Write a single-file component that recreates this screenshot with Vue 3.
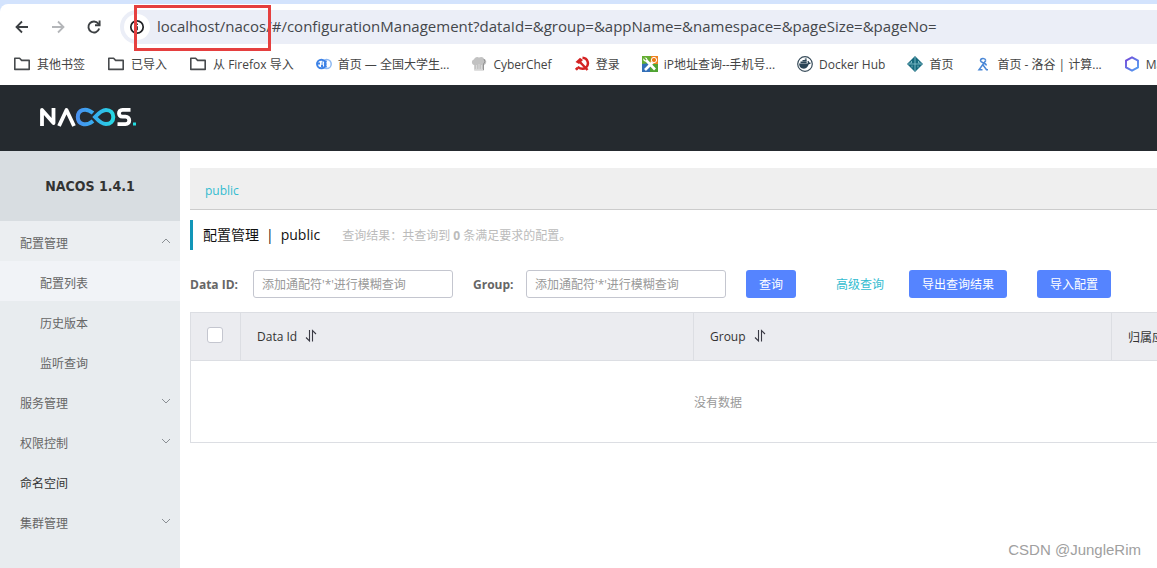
<script setup>
import { ref } from 'vue'

const url = ref('localhost/nacos/#/configurationManagement?dataId=&group=&appName=&namespace=&pageSize=&pageNo=')
const dataId = ref('')
const group = ref('')

const bookmarks = [
  { icon: 'folder', label: '其他书签' },
  { icon: 'folder', label: '已导入' },
  { icon: 'folder', label: '从 Firefox 导入' },
  { icon: 'rings', label: '首页 — 全国大学生...' },
  { icon: 'chef', label: 'CyberChef' },
  { icon: 'emblem', label: '登录' },
  { icon: 'tools', label: 'iP地址查询--手机号...' },
  { icon: 'docker', label: 'Docker Hub' },
  { icon: 'diamond', label: '首页' },
  { icon: 'luogu', label: '首页 - 洛谷 | 计算...' },
  { icon: 'hexagon', label: 'Maven' },
]

const menu = [
  { label: '配置管理', arrow: 'up', open: true },
  { label: '配置列表', child: true, active: true },
  { label: '历史版本', child: true },
  { label: '监听查询', child: true },
  { label: '服务管理', arrow: 'down' },
  { label: '权限控制', arrow: 'down' },
  { label: '命名空间', dark: true },
  { label: '集群管理', arrow: 'down' },
]
</script>

<template>
  <div class="window">
    <div class="browser">
      <div class="toolbar">
        <button class="nav" aria-label="Back">
          <svg width="16" height="16" viewBox="0 0 16 16" fill="none" stroke="#3c4043" stroke-width="1.8"><path d="M14 8H3M8 2.5L2.5 8L8 13.5" /></svg>
        </button>
        <button class="nav" aria-label="Forward">
          <svg width="16" height="16" viewBox="0 0 16 16" fill="none" stroke="#b4b6b9" stroke-width="1.8"><path d="M2 8H13M8 2.5L13.5 8L8 13.5" /></svg>
        </button>
        <button class="nav" aria-label="Reload">
          <svg width="16" height="16" viewBox="0 0 16 16" fill="none" stroke="#3c4043" stroke-width="1.9"><path d="M13.2 9.5A5.5 5.5 0 1 1 12.3 4.6L13.6 6" /><path d="M13.6 1.5V6.2H9" /></svg>
        </button>
        <div class="address">
          <button class="info" aria-label="Site information">
            <svg width="16" height="16" viewBox="0 0 16 16" fill="none" stroke="#202124" stroke-width="1.7"><circle cx="8" cy="8" r="6.2" /><path d="M8 7.2V11.2M8 4.6V6" /></svg>
          </button>
          <input v-model="url" class="url" aria-label="Address" />
          <div class="marker"></div>
        </div>
      </div>
      <nav class="bookmarks">
        <a v-for="b in bookmarks" :key="b.label + b.icon" href="#" class="bookmark">
          <svg v-if="b.icon === 'folder'" width="18" height="16" viewBox="0 0 18 16" fill="none" stroke="#474a4d" stroke-width="1.6" stroke-linejoin="round"><path d="M1.8 2.3H6.6L8.6 4.4H16.2V13.4H1.8Z" /></svg>
          <svg v-else-if="b.icon === 'rings'" width="16" height="16" viewBox="0 0 16 16" fill="none">
            <circle cx="10.6" cy="8" r="4.6" stroke="#8db9f3" stroke-width="1.5" /><circle cx="5.4" cy="8" r="4.3" stroke="#3d82e6" stroke-width="2" /><path d="M10.5 4.7A3.9 3.9 0 0 0 10.5 11.3M.5 7.5H4M5 10H7" stroke="#3d82e6" stroke-width="1.8" />
          </svg>
          <svg v-else-if="b.icon === 'chef'" width="16" height="16" viewBox="0 0 16 16">
            <path d="M3.2 9C.2 8.5 .2 4 3 3.5C3.5 1 6.5 .2 8 1.6C10 .2 12.8 1 13 3C16 3.5 16 8 13 9V14.6H3.2Z" fill="#c2c2c2" /><path d="M5.5 9V13M8 8V13M10.5 9V13M3.2 13.4H13" stroke="#dedede" stroke-width=".8" /><path d="M13 3Q15 6 12.5 8V14" stroke="#949494" fill="none" />
          </svg>
          <svg v-else-if="b.icon === 'emblem'" width="16" height="16" viewBox="0 0 16 16" fill="none" stroke="#d42323">
            <path d="M1.5 6L6 1.8L9 4L5 8Z" fill="#d42323" stroke="none" /><path d="M5 5L13.5 14" stroke-width="2.5" /><path d="M8.5 1.7C14 2 15.5 8.5 12 11.5C9.5 13.6 6 12.6 3.5 11" stroke-width="2.5" /><circle cx="2.8" cy="12.8" r="1.1" fill="#d42323" />
          </svg>
          <svg v-else-if="b.icon === 'tools'" width="16" height="16" viewBox="0 0 16 16">
            <path d="M0 0H10L8 8L0 10Z" fill="#64ad32" /><path d="M9 0H16V9H8Z" fill="#ef8322" /><path d="M0 8L8 7V16H0Z" fill="#336fb7" /><path d="M8 8H16V16H8Z" fill="#4fa332" /><path d="M3 3L13 13.5M11 6L3 14" stroke="#fff" stroke-width="2.6" /><circle cx="12" cy="4" r="2.6" fill="#ed7a16" stroke="#fff" /><circle cx="3.3" cy="3.5" r="2" fill="#fff" /><path d="M2 2L4 4" stroke="#64ad32" stroke-width="1.5" />
          </svg>
          <svg v-else-if="b.icon === 'docker'" width="16" height="16" viewBox="0 0 16 16">
            <circle cx="8" cy="8" r="7.3" fill="#fff" stroke="#394d5b" stroke-width="1.2" /><path d="M2 7.5H10.5C11 6.8 10.8 6 10.4 5.5L11.2 4.8Q12.2 5.5 12.2 6.5Q13.5 6.3 14 7Q13 8.2 11.8 8.2C10.5 12 8 13 5.5 12.6Q2.5 12 2 7.5Z" fill="#2b4557" /><path d="M3.5 5.5H9.7V7.2H3.5ZM5.5 4H9.7V5.2H5.5ZM7.8 2.5H9.7V3.8H7.8Z" fill="#2b4557" />
          </svg>
          <svg v-else-if="b.icon === 'diamond'" width="16" height="16" viewBox="0 0 16 16">
            <path d="M8 0L16 8L8 16L0 8Z" fill="#17697d" /><path d="M8 1V15M1 8H15M4.5 5V7H2.5M11.5 5V7H13.5M5 11.5V9.5M11 11.5V9.5" stroke="#8cc5d0" stroke-width=".8" fill="none" />
          </svg>
          <svg v-else-if="b.icon === 'luogu'" width="16" height="16" viewBox="0 0 16 16" fill="none" stroke="#4a87d6" stroke-width="1.5">
            <path d="M10.8 4.5C10 1.5 5.5 2 5.5 4.7C5.5 7 11.5 6.5 11.3 9.5M10.8 4.5L4 13.8H7.5M8 9L11.5 13.8H13" />
          </svg>
          <svg v-else width="16" height="16" viewBox="0 0 16 16" fill="none">
            <defs><linearGradient id="hex" x1="0" y1="0" x2="1" y2="1"><stop offset="0" stop-color="#7245d8" /><stop offset="1" stop-color="#50a2f2" /></linearGradient></defs>
            <path d="M8 1.3L14 4.6V11.4L8 14.7L2 11.4V4.6Z" stroke="url(#hex)" stroke-width="1.9" />
          </svg>
          <span>{{ b.label }}</span>
        </a>
      </nav>
    </div>

    <header class="header">
      <svg class="logo" width="98" height="20" viewBox="0 0 98 20" fill="none" role="img" aria-label="NACOS">
        <defs><linearGradient id="loop" x1="36" y1="0" x2="76" y2="0" gradientUnits="userSpaceOnUse"><stop offset="0" stop-color="#4a8ff0" /><stop offset=".5" stop-color="#35b0ee" /><stop offset="1" stop-color="#24dce0" /></linearGradient></defs>
        <path d="M2 19V3L13.5 16V1" stroke="#fff" stroke-width="3.8" stroke-linejoin="round" />
        <path d="M19 19L26.5 3L34 19" stroke="#fff" stroke-width="3.8" stroke-linejoin="round" />
        <path d="M53 14C45 20.5 37.8 16.5 37.8 10C37.8 3.5 45 -.5 53 6M55 10C60 4.5 63 2.9 66 2.9C70.5 2.9 73.3 6 73.3 10C73.3 14 70.5 17.1 66 17.1C63 17.1 60 15.5 55 10Z" stroke="url(#loop)" stroke-width="4" />
        <path d="M90.5 2.8H82.5C77.8 2.8 77.8 9.7 82.5 9.7H85.5C90.5 9.7 90.5 17.1 85.5 17.1H77.5" stroke="#fff" stroke-width="3.8" />
        <rect x="93" y="15.5" width="3" height="3" fill="#24dce0" />
      </svg>
    </header>

    <div class="body">
      <aside class="sidebar">
        <h1 class="product">NACOS 1.4.1</h1>
        <ul class="menu">
          <li v-for="m in menu" :key="m.label">
            <a href="#" class="item" :class="{ child: m.child, active: m.active, dark: m.dark, open: m.open }">
              <span>{{ m.label }}</span>
              <svg v-if="m.arrow" width="10" height="10" viewBox="0 0 10 10" fill="none" stroke="#8a8f94">
                <path :d="m.arrow === 'up' ? 'M1 7L5 3L9 7' : 'M1 3L5 7L9 3'" />
              </svg>
            </a>
          </li>
        </ul>
      </aside>

      <main class="main">
        <div class="namespaces"><a href="#">public</a></div>
        <div class="heading">
          <h2>配置管理<span class="bar">|</span>public</h2>
          <p>查询结果：共查询到 <strong>0</strong> 条满足要求的配置。</p>
        </div>
        <form class="filters" @submit.prevent>
          <label for="data-id">Data ID:</label>
          <input id="data-id" v-model="dataId" type="text" placeholder="添加通配符'*'进行模糊查询" />
          <label for="group" class="second">Group:</label>
          <input id="group" v-model="group" type="text" placeholder="添加通配符'*'进行模糊查询" />
          <button type="submit" class="primary search">查询</button>
          <a href="#" class="advanced">高级查询</a>
          <button type="button" class="primary export">导出查询结果</button>
          <button type="button" class="primary import">导入配置</button>
        </form>
        <table class="grid">
          <colgroup><col class="c-check" /><col class="c-id" /><col class="c-group" /><col /></colgroup>
          <thead>
            <tr>
              <th class="check"><input type="checkbox" aria-label="全选" /></th>
              <th v-for="name in ['Data Id', 'Group']" :key="name">
                <span class="sortable">{{ name }}
                  <svg width="12" height="14" viewBox="0 0 12 14" fill="none" stroke="#3a3a44" stroke-width="1.1"><path d="M4.5 1V12L1 8.5M7.5 12.5V1.5L11 5" /></svg>
                </span>
              </th>
              <th>归属应用</th>
            </tr>
          </thead>
          <tbody><tr><td colspan="4">没有数据</td></tr></tbody>
        </table>
      </main>
    </div>
    <div class="watermark">CSDN @JungleRim</div>
  </div>
</template>

<style>
body { margin: 0; overflow: hidden; }
</style>

<style scoped>
.window {
  position: relative;
  display: flex;
  flex-direction: column;
  height: 100vh;
  overflow: hidden;
  background: #fff;
  font-family: "Open Sans", "Noto Sans CJK SC", sans-serif;
  font-size: 12px;
}
* { box-sizing: border-box; }
a { text-decoration: none; }
button { border: 0; font-family: inherit; }
svg { flex: none; }

.browser { background: #d3e3fd; padding-top: 4px; flex: none; }
.toolbar {
  display: flex;
  align-items: center;
  height: 46px;
  padding-left: 12px;
  background: #fff;
  border-top-left-radius: 8px;
}
.nav { display: flex; width: 20px; padding: 2px; margin-right: 16px; background: none; }
.address {
  position: relative;
  display: flex;
  align-items: center;
  flex: 1;
  height: 34px;
  padding-left: 4px;
  border-radius: 17px 0 0 17px;
  background: #ebeef7;
}
.info { display: flex; padding: 5px; border-radius: 50%; background: #fff; }
.url {
  flex: 1;
  min-width: 0;
  border: 0;
  padding: 0 0 2px 7px;
  background: none;
  color: #44474b;
  font-family: inherit;
  font-size: 15px;
  outline: none;
}
.marker {
  position: absolute;
  left: 14px;
  top: -5px;
  width: 137px;
  height: 46px;
  border: 3px solid #e53f3f;
}
.bookmarks {
  display: flex;
  height: 35px;
  padding: 0 0 7px 13px;
  gap: 22px;
  background: #fff;
  overflow: hidden;
}
.bookmark {
  display: flex;
  align-items: center;
  gap: 6px;
  flex: none;
  color: #444;
  white-space: nowrap;
}

.header { display: flex; align-items: center; flex: none; height: 66px; padding: 0 0 2px 40px; background: #252a2f; }

.body { display: flex; flex: 1; min-height: 0; }
.sidebar { flex: none; width: 180px; background: #e8ecef; }
.product {
  margin: 0;
  background: #d8dde1;
  color: #333;
  font-family: "DejaVu Sans Condensed", "DejaVu Sans", sans-serif;
  font-size: 14px;
  line-height: 70px;
  text-align: center;
}
.menu { list-style: none; margin: 0; padding: 0; }
.item {
  display: flex;
  align-items: center;
  justify-content: space-between;
  height: 40px;
  padding: 4px 9px 0 20px;
  color: #666;
}
.item svg { margin-bottom: 4px; }
.item.open { background: #ebeef1; }
.item.child { padding-left: 40px; }
.item.active { background: #f1f3f7; }
.item.dark { color: #333; }

.main { flex: 1; min-width: 0; padding: 17px 0 0 10px; overflow: hidden; }
.namespaces {
  height: 42px;
  padding-left: 15px;
  border-bottom: 1px solid #ccc;
  background: #efefef;
  line-height: 45px;
}
.namespaces a, .advanced { color: #33bcd0; }
.heading { display: flex; align-items: center; height: 30px; margin-top: 10px; padding-left: 10px; border-left: 3px solid #1296b8; }
.heading h2 { margin: 0; padding-bottom: 2px; color: #111; font-size: 14px; font-weight: 400; }
.bar { margin: 0 7px; }
.heading p { margin: 0 0 0 22px; color: #bbb; }
.filters { display: flex; align-items: center; height: 28px; margin-top: 20px; white-space: nowrap; }
.filters label { flex: none; width: 63px; color: #666; font-weight: 700; }
.filters label.second { width: 53px; margin-left: 20px; }
.filters input {
  width: 200px;
  height: 28px;
  padding: 0 8px;
  border: 1px solid #c4c6cf;
  border-radius: 3px;
  font-family: inherit;
  font-size: 12px;
}
.filters input::placeholder { color: #999; }
.primary {
  height: 28px;
  padding: 0 13px;
  border-radius: 3px;
  background: #5584ff;
  color: #fff;
  font-size: 12px;
}
.search { margin-left: 20px; }
.advanced { margin-left: 40px; }
.export { margin-left: 25px; }
.import { margin-left: 30px; }

.grid {
  width: 100%;
  min-width: 1056px;
  margin-top: 14px;
  border: 1px solid #dcdee3;
  border-collapse: collapse;
  table-layout: fixed;
}
.c-check { width: 50px; }
.c-id { width: 453px; }
.c-group { width: 418px; }
th {
  height: 48px;
  padding: 0 16px;
  border: 1px solid #dcdee3;
  background: #ebecf0;
  color: #333;
  font-weight: 400;
  text-align: left;
}
.check { padding: 0 2px 4px 0; text-align: center; }
.check input {
  appearance: none;
  width: 16px;
  height: 16px;
  margin: 0;
  border: 1px solid #c4c6cf;
  border-radius: 3px;
  background: #fff;
  vertical-align: middle;
}
.sortable { display: flex; align-items: center; gap: 8px; }
.sortable svg { margin-bottom: 2px; }
td { height: 82px; color: #999; text-align: center; }
.watermark {
  position: absolute;
  right: 16px;
  bottom: 10px;
  color: #a0a0a0;
  font-family: "Liberation Sans", sans-serif;
  font-size: 15px;
}
</style>
